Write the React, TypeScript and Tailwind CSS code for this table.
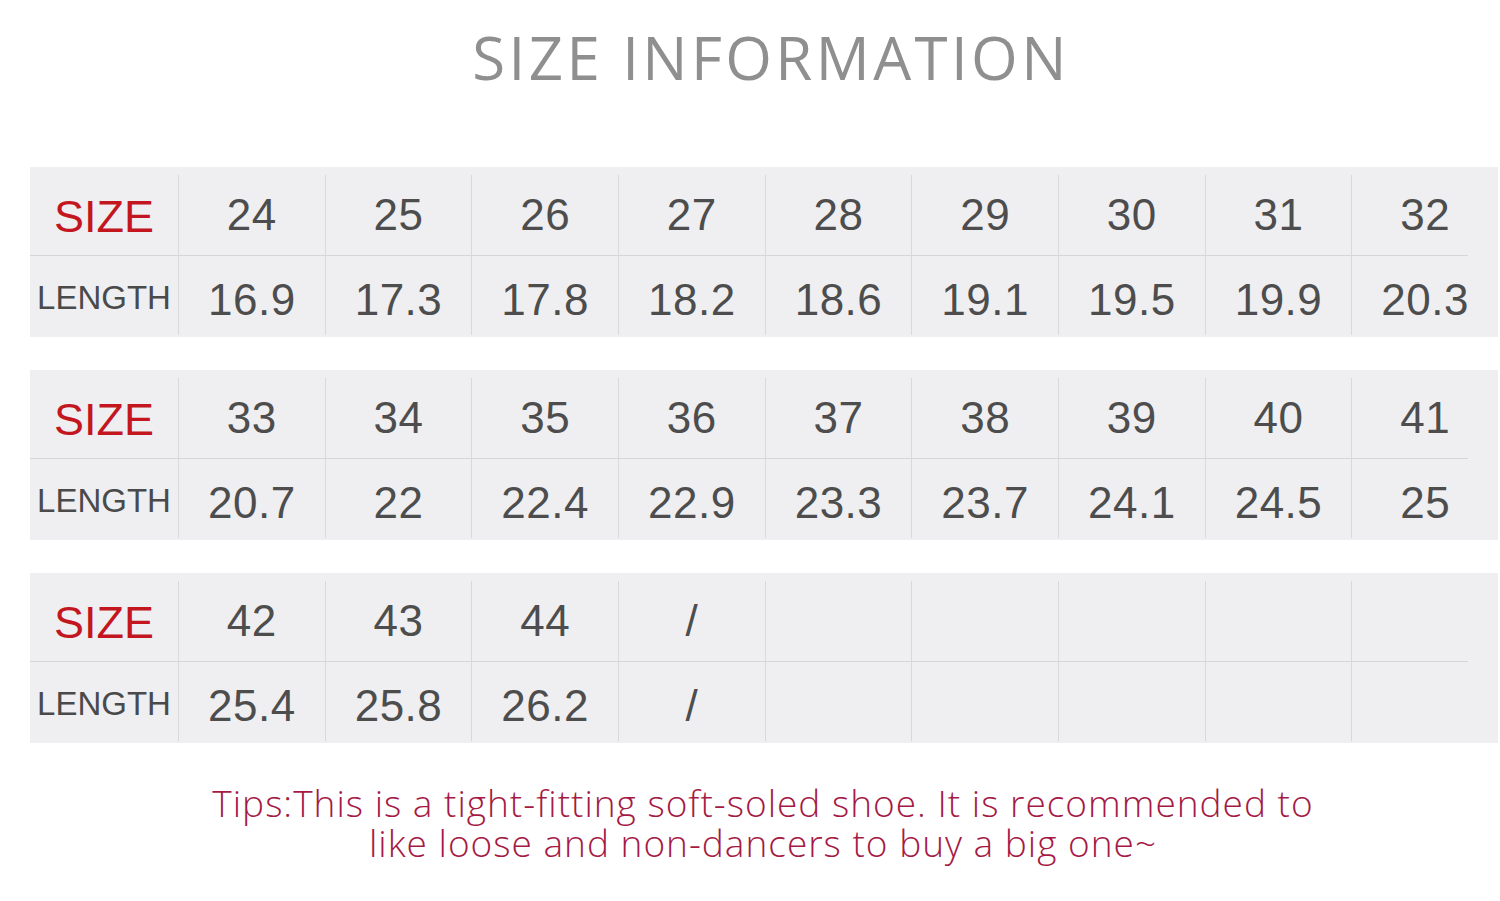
import React from 'react';

const blocks = [
  {
    sizes: ['24', '25', '26', '27', '28', '29', '30', '31', '32'],
    lengths: ['16.9', '17.3', '17.8', '18.2', '18.6', '19.1', '19.5', '19.9', '20.3'],
  },
  {
    sizes: ['33', '34', '35', '36', '37', '38', '39', '40', '41'],
    lengths: ['20.7', '22', '22.4', '22.9', '23.3', '23.7', '24.1', '24.5', '25'],
  },
  {
    sizes: ['42', '43', '44', '/', '', '', '', '', ''],
    lengths: ['25.4', '25.8', '26.2', '/', '', '', '', '', ''],
  },
];

const numFont = { fontFamily: '"Liberation Sans", Arial, sans-serif' };

function Row({ label, values, isSize }: { label: string; values: string[]; isSize: boolean }) {
  return (
    <div className={'grid grid-cols-[148px_repeat(9,1fr)] ' + (isSize ? 'h-[80px]' : 'h-[79px]')}>
      <div
        className={
          isSize
            ? 'flex items-center justify-center text-[45px] text-[#c3161e] pt-1'
            : 'flex items-center justify-center text-[33px] text-[#4a4a4a] pt-1'
        }
        style={numFont}
      >
        {label}
      </div>
      {values.map((v, i) => (
        <div
          key={i}
          className={
            'flex items-center justify-center border-l border-[#d9d9dc] text-[44px] text-[#4d4d4d] tracking-[0.5px] ' +
            (isSize ? '' : 'pt-2')
          }
          style={numFont}
        >
          {v}
        </div>
      ))}
    </div>
  );
}

export default function App() {
  return (
    <div className="w-[1500px] h-[901px] bg-white flex flex-col overflow-hidden">
      {/* título */}
      <div className="h-[167px] pl-[42px] pt-[22px] flex justify-center">
        <h1
          className="text-[60px] leading-[70px] text-[#8f8f8f] tracking-[3.4px] font-normal"
          style={{ fontFamily: '"Open Sans", "Noto Sans", sans-serif' }}
        >
          SIZE INFORMATION
        </h1>
      </div>

      {/* tablas */}
      <div className="flex flex-col gap-[33px] pl-[30px] pr-[2px]">
        {blocks.map((b, i) => (
          <div key={i} className="bg-[#efeff1] pt-2 pb-[2px]">
            <Row label="SIZE" values={b.sizes} isSize />
            <div className="h-px bg-[#d6d6d9] mr-[30px]" />
            <Row label="LENGTH" values={b.lengths} isSize={false} />
          </div>
        ))}
      </div>

      {/* nota */}
      <div
        className="mt-[40px] pl-[26px] text-center text-[37px] leading-[40px] tracking-[1px] text-[#a51a45] font-light"
        style={{ fontFamily: '"Open Sans", "Noto Sans", sans-serif' }}
      >
        <p>Tips:This is a tight-fitting soft-soled shoe. It is recommended to</p>
        <p>like loose and non-dancers to buy a big one~</p>
      </div>
    </div>
  );
}
